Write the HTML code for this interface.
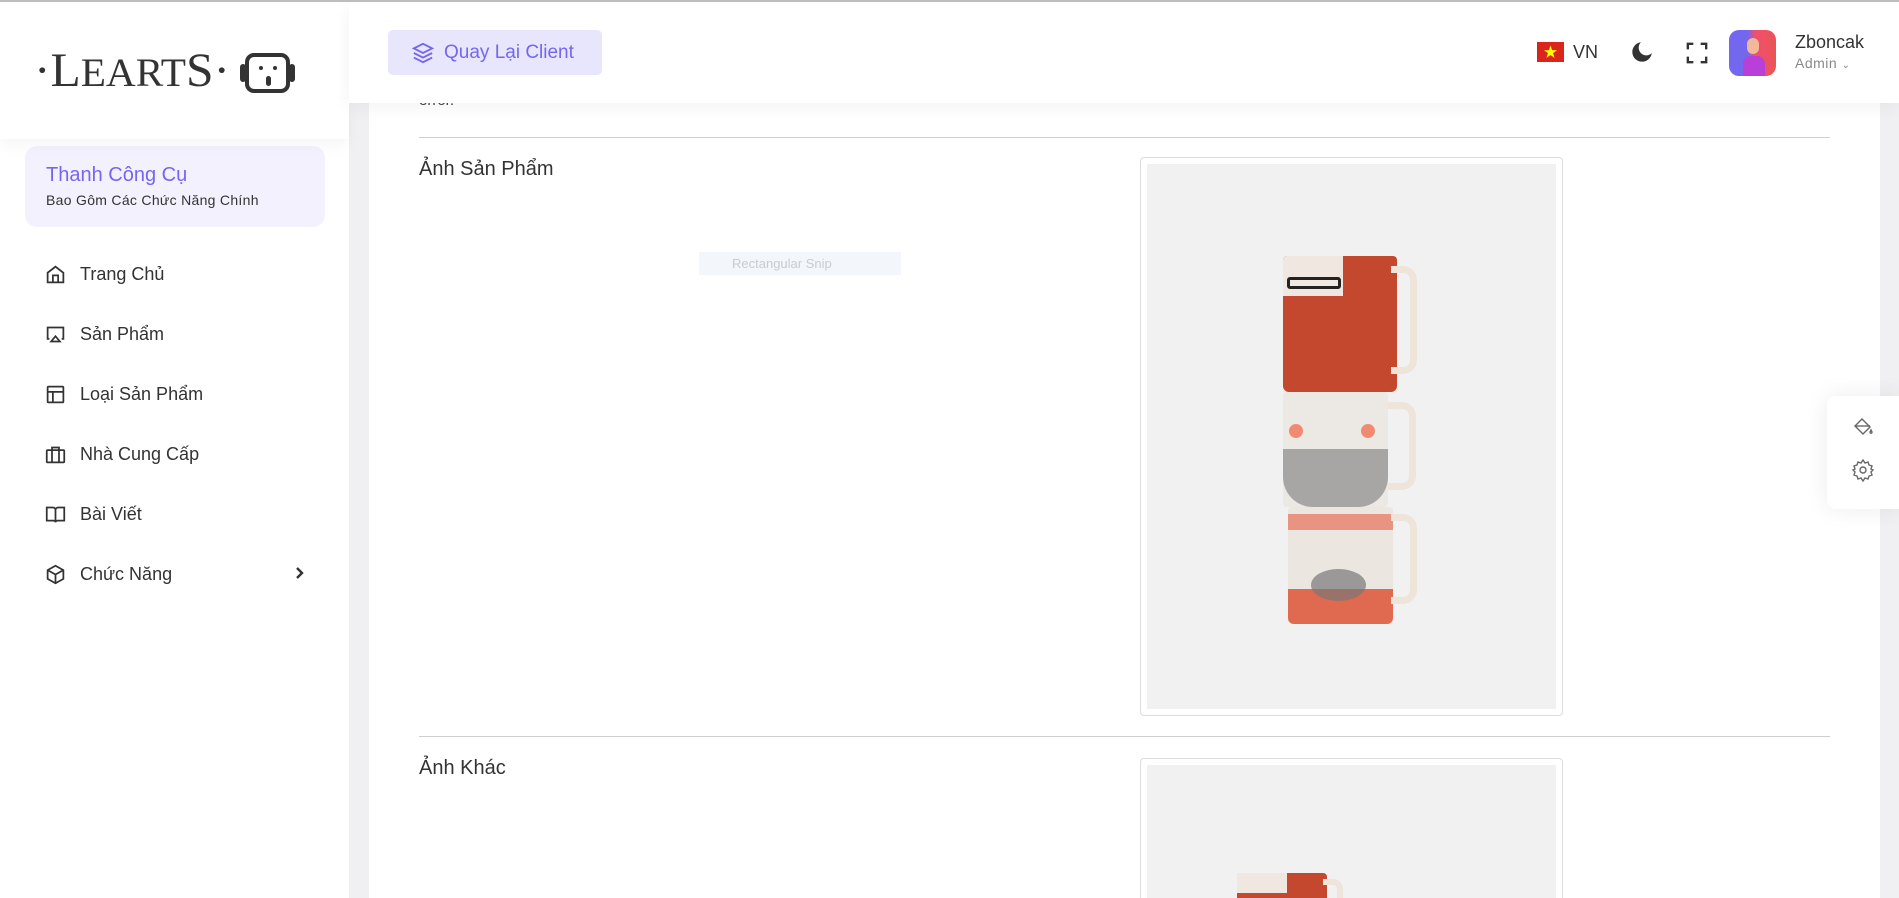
<!DOCTYPE html>
<html><head><meta charset="utf-8"><style>
*{box-sizing:border-box;margin:0;padding:0}
html,body{width:1899px;height:898px;overflow:hidden}
body{background:#f0f0f3;font-family:"Liberation Sans","Noto Sans CJK SC",sans-serif;position:relative;color:#333}
.abs{position:absolute}
#topline{left:0;top:0;width:1899px;height:2px;background:#bdbdbd;z-index:10}
#side{left:0;top:2px;width:349px;height:896px;background:#fff}
#logoarea{left:0;top:2px;width:349px;height:137px;background:#fff;box-shadow:0 6px 14px rgba(0,0,0,.04);z-index:2}
#panel{left:369px;top:0;width:1511px;height:898px;background:#fff}
#hdr{left:349px;top:2px;width:1550px;height:101px;background:#fff;box-shadow:0 4px 18px rgba(0,0,0,.05);z-index:3}
.menu{left:45px;font-size:18px;color:#333;display:flex;align-items:center}
.menu svg{width:21px;height:21px;margin-right:14px;stroke:#333;fill:none;stroke-width:2}
.hr{left:419px;width:1411px;height:1px;background:#cfcfcf}
.lbl{left:419px;font-size:20px;color:#333}
.box{left:1140px;width:423px;border:1px solid #ddd;border-radius:4px;background:#fff;overflow:hidden}
.inner{position:absolute;left:6px;top:6px;right:6px;bottom:6px;background:#f1f1f1}
</style></head><body>
<div id="topline" class="abs"></div>
<div id="side" class="abs"></div>
<div id="panel" class="abs"></div>
<div class="abs" style="left:1880px;top:0;width:19px;height:898px;background:#f0f0f3"></div>
<div id="logoarea" class="abs">
 <svg class="abs" style="left:34px;top:40px" width="200" height="50"><text x="0" y="44" textLength="196" lengthAdjust="spacingAndGlyphs" font-family="Liberation Serif, serif" font-size="48" fill="#333">·L<tspan font-size="40">EART</tspan>S·</text></svg>
 <div class="abs" style="left:245px;top:51px;width:45px;height:40px;border:4px solid #333;border-radius:9px"></div>
 <div class="abs" style="left:240px;top:62px;width:6px;height:18px;background:#333;border-radius:3px"></div>
 <div class="abs" style="left:289px;top:62px;width:6px;height:18px;background:#333;border-radius:3px"></div>
 <div class="abs" style="left:259px;top:64px;width:4px;height:4px;background:#333;border-radius:2px"></div>
 <div class="abs" style="left:273px;top:64px;width:4px;height:4px;background:#333;border-radius:2px"></div>
 <div class="abs" style="left:266px;top:74px;width:5px;height:10px;background:#333;border-radius:3px"></div>
</div>
<div class="abs" style="left:25px;top:146px;width:300px;height:81px;background:#f3f1fe;border-radius:12px"></div>
<div class="abs" style="left:46px;top:164px;font-size:20px;color:#7367f0">Thanh Công Cụ</div>
<div class="abs" style="left:46px;top:192px;font-size:14px;color:#333;letter-spacing:.3px">Bao Gôm Các Chức Năng Chính</div>

<div class="abs menu" style="top:264px"><svg viewBox="0 0 24 24"><path d="M3 10l9-7 9 7v11H3z"/><path d="M9 21v-8h6v8"/></svg>Trang Chủ</div>
<div class="abs menu" style="top:324px"><svg viewBox="0 0 24 24"><path d="M5 17H3V4h18v13h-2"/><path d="M12 14l5 6H7z"/></svg>Sản Phẩm</div>
<div class="abs menu" style="top:384px"><svg viewBox="0 0 24 24"><rect x="3" y="3" width="18" height="18" rx="1"/><path d="M3 9h18M9 9v12"/></svg>Loại Sản Phẩm</div>
<div class="abs menu" style="top:444px"><svg viewBox="0 0 24 24"><rect x="2" y="7" width="20" height="14" rx="1"/><path d="M16 21V4H8v17"/></svg>Nhà Cung Cấp</div>
<div class="abs menu" style="top:504px"><svg viewBox="0 0 24 24"><path d="M2 4h7a3 3 0 013 3v14a2 2 0 00-2-2H2zM22 4h-7a3 3 0 00-3 3v14a2 2 0 012-2h8z"/></svg>Bài Viết</div>
<div class="abs menu" style="top:564px"><svg viewBox="0 0 24 24"><path d="M12 2l9 5v10l-9 5-9-5V7z"/><path d="M3 7l9 5 9-5M12 12v10"/></svg>Chức Năng</div>
<svg class="abs" style="left:294px;top:566px" width="12" height="14" viewBox="0 0 12 14"><path d="M3 2l5 5-5 5" stroke="#333" stroke-width="2.4" fill="none"/></svg>

<div id="hdr" class="abs">
 <div class="abs" style="left:39px;top:28px;width:214px;height:45px;background:#e8e6fd;border-radius:5px;display:flex;align-items:center;padding-left:24px;color:#7367f0;font-size:19px">
  <svg width="22" height="22" viewBox="0 0 24 24" style="margin-right:10px" fill="none" stroke="#7367f0" stroke-width="2"><path d="M12 2l10 5-10 5L2 7z"/><path d="M2 12l10 5 10-5M2 17l10 5 10-5"/></svg>Quay Lại Client</div>
 <div class="abs" style="left:1188px;top:40px;width:27px;height:20px;background:#da251d;color:#ff0;font-size:14px;text-align:center;line-height:20px">★</div>
 <div class="abs" style="left:1224px;top:40px;font-size:18px;color:#333">VN</div>
 <svg class="abs" style="left:1280px;top:37px" width="26" height="26" viewBox="0 0 24 24"><path d="M21 13A9 9 0 1111 3a7 7 0 0010 10z" fill="#333"/></svg>
 <svg class="abs" style="left:1337px;top:40px" width="22" height="22" viewBox="0 0 24 24" fill="none" stroke="#333" stroke-width="2.6"><path d="M2 8V2h6M16 2h6v6M22 16v6h-6M8 22H2v-6"/></svg>
 <div class="abs" style="left:1380px;top:28px;width:47px;height:46px;border-radius:10px;background:linear-gradient(90deg,#7367f0 0%,#7367f0 40%,#f0506e 55%,#ea5455 100%);overflow:hidden"><div style="position:absolute;left:14px;top:26px;width:22px;height:22px;background:#b83fd8;border-radius:8px 8px 0 0"></div><div style="position:absolute;left:18px;top:8px;width:12px;height:16px;background:#f2b89a;border-radius:6px"></div></div>
 <div class="abs" style="left:1446px;top:30px;font-size:18px;color:#333">Zboncak</div>
 <div class="abs" style="left:1446px;top:53px;font-size:14px;color:#888;letter-spacing:.5px">Admin <span style="font-size:10px">⌄</span></div>
</div>

<div class="abs" style="left:419px;top:92px;font-size:15px;color:#444">error.</div>
<div class="abs hr" style="top:137px"></div>
<div class="abs lbl" style="top:158px">Ảnh Sản Phẩm</div>
<div class="abs" style="left:699px;top:252px;width:202px;height:23px;background:#f3f7fc;font-size:13px;color:#c8ccd3;padding:4px 0 0 33px">Rectangular Snip</div>
<div class="abs box" style="top:157px;height:559px"><div class="inner">
 <div class="abs" style="left:136px;top:92px;width:114px;height:136px;background:#c4482e;border-radius:4px 4px 6px 6px"></div>
 <div class="abs" style="left:136px;top:92px;width:60px;height:40px;background:#f0e8e0;border-radius:4px 0 0 0"></div>
 <div class="abs" style="left:140px;top:113px;width:54px;height:12px;border:3px solid #222;border-radius:3px"></div>
 <div class="abs" style="left:244px;top:102px;width:26px;height:108px;border:7px solid #eee4da;border-left:none;border-radius:0 14px 14px 0"></div>
 <div class="abs" style="left:136px;top:228px;width:105px;height:115px;background:#ece8e4;border-radius:4px"></div>
 <div class="abs" style="left:136px;top:285px;width:105px;height:58px;background:#8a8a8a;border-radius:0 0 30px 30px;opacity:.7"></div>
 <div class="abs" style="left:142px;top:260px;width:14px;height:14px;background:#f08a72;border-radius:50%"></div>
 <div class="abs" style="left:214px;top:260px;width:14px;height:14px;background:#f08a72;border-radius:50%"></div>
 <div class="abs" style="left:241px;top:238px;width:28px;height:88px;border:7px solid #eee4da;border-left:none;border-radius:0 14px 14px 0"></div>
 <div class="abs" style="left:141px;top:343px;width:105px;height:117px;background:#ece6e0;border-radius:4px"></div>
 <div class="abs" style="left:141px;top:350px;width:105px;height:16px;background:#e8806a;opacity:.8"></div>
 <div class="abs" style="left:141px;top:425px;width:105px;height:35px;background:#e06a50;border-radius:0 0 6px 6px"></div>
 <div class="abs" style="left:164px;top:405px;width:55px;height:32px;background:#777;border-radius:50%;opacity:.7"></div>
 <div class="abs" style="left:244px;top:350px;width:26px;height:90px;border:7px solid #eee4da;border-left:none;border-radius:0 14px 14px 0"></div>
</div></div>
<div class="abs hr" style="top:736px"></div>
<div class="abs lbl" style="top:757px">Ảnh Khác</div>
<div class="abs box" style="top:758px;height:150px"><div class="inner" style="bottom:-20px">
 <div class="abs" style="left:90px;top:108px;width:90px;height:40px;background:#c4482e;border-radius:4px"></div>
 <div class="abs" style="left:90px;top:108px;width:50px;height:20px;background:#f0e8e0"></div>
 <div class="abs" style="left:176px;top:114px;width:20px;height:40px;border:6px solid #eee4da;border-left:none;border-radius:0 10px 10px 0"></div>
</div></div>

<div class="abs" style="left:1827px;top:396px;width:72px;height:113px;background:#fff;border-radius:8px 0 0 8px;box-shadow:0 0 24px rgba(0,0,0,.08)"></div>
<svg class="abs" style="left:1851px;top:416px" width="24" height="24" viewBox="0 0 24 24" fill="none" stroke="#666" stroke-width="1.4"><path d="M4 10l7-7 8 8-7 7z"/><path d="M4 10h15"/><path d="M21 16c0 1.5-2 1.5-2 0l1-2z"/></svg>
<svg class="abs" style="left:1851px;top:458px" width="24" height="24" viewBox="0 0 24 24" fill="none" stroke="#666" stroke-width="1.4"><circle cx="12" cy="12" r="3"/><path d="M12 2l2 3 3-1 1 3 3 1-1 3 2 1-2 2 1 3-3 1-1 3-3-1-2 3-2-3-3 1-1-3-3-1 1-3-2-2 2-1-1-3 3-1 1-3 3 1z"/></svg>
</body></html>
